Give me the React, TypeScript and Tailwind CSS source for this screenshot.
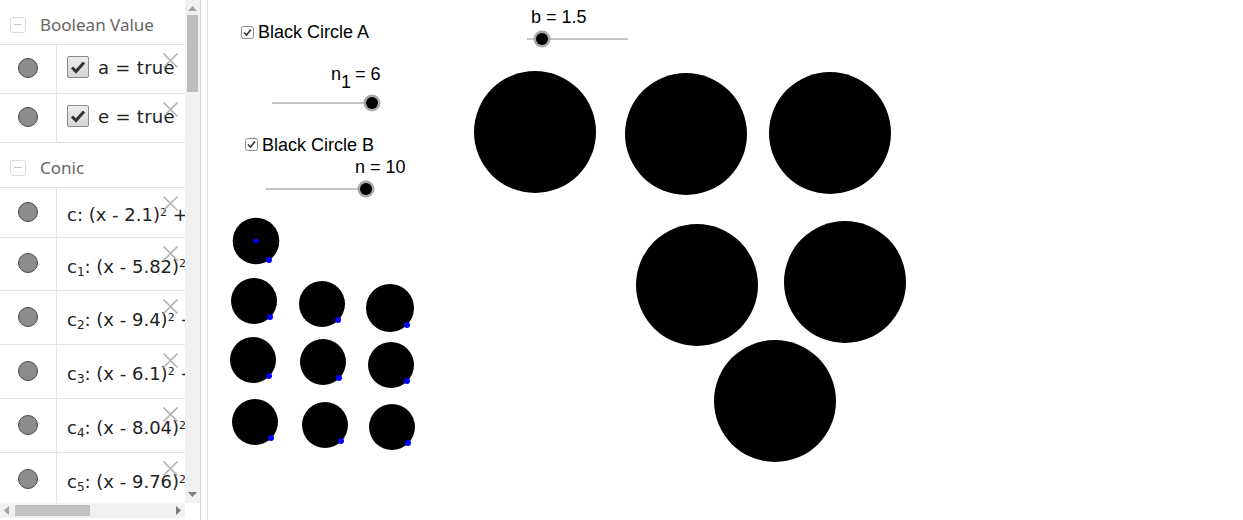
import React from "react";

const SANS = { fontFamily: '"DejaVu Sans", "Noto Sans", sans-serif' };

function Marble() {
  return <div className="w-[20px] h-[20px] rounded-full bg-[#8c8c8c] border border-[#4a4a4a]" />;
}

function DeleteX() {
  return (
    <svg className="absolute right-[6px] top-[7px]" width="17" height="17" viewBox="0 0 17 17">
      <path d="M1.5 1.5 L15.5 15.5 M15.5 1.5 L1.5 15.5" stroke="#b0b0b0" strokeWidth="1.6" fill="none" />
    </svg>
  );
}

function GroupHeader({ label, h }: { label: string; h: string }) {
  return (
    <div className={`flex items-center pt-[5px] ${h} border-b border-[#e3e3e3]`}>
      <div className="ml-[10px] w-[16px] h-[16px] rounded-[3px] border border-[#dcdcdc] flex items-center justify-center">
        <div className="w-[8px] h-[1.5px] bg-[#c8c8c8]" />
      </div>
      <span className="ml-[14px] text-[17px] text-[#666]" style={{ fontFamily: '"Noto Sans", sans-serif' }}>
        {label}
      </span>
    </div>
  );
}

function Row({ h, pad, children }: { h: string; pad: string; children: React.ReactNode }) {
  return (
    <div className={`relative flex ${h} border-b border-[#e3e3e3]`}>
      <div className="w-[57px] shrink-0 flex items-center justify-center border-r border-[#e3e3e3] pb-[2px]">
        <Marble />
      </div>
      <div className={`flex-1 flex items-center overflow-hidden whitespace-nowrap pl-[10px] ${pad}`}>{children}</div>
      <DeleteX />
    </div>
  );
}

function BoolItem({ name }: { name: string }) {
  return (
    <>
      <div className="w-[22px] h-[22px] shrink-0 rounded-[2px] border border-[#8a8a8a] bg-gradient-to-b from-[#ececec] to-[#d6d6d6] flex items-center justify-center">
        <svg width="16" height="14" viewBox="0 0 16 14">
          <path d="M2 7.5 L6 11.5 L14 2.5" stroke="#333" strokeWidth="3" fill="none" />
        </svg>
      </div>
      <span className="ml-[9px] text-[18px] text-[#222] tracking-[0.3px]" style={SANS}>
        {name} = true
      </span>
    </>
  );
}

function ConicItem({ sub, val, tail }: { sub?: string; val: string; tail: string }) {
  return (
    <span className="text-[18px] text-[#222]" style={SANS}>
      c{sub && <sub className="text-[12px]">{sub}</sub>}: (x - {val})
      <sup className="text-[11px]">2</sup> {tail}
    </span>
  );
}

function AlgebraPanel() {
  return (
    <div className="w-[200px] h-[520px] flex flex-col shrink-0">
      <div className="flex h-[503px]">
        <div className="w-[185px] overflow-hidden bg-white">
          <GroupHeader label="Boolean Value" h="h-[45px]" />
          <Row h="h-[49px]" pad="pb-[4px]">
            <BoolItem name="a" />
          </Row>
          <Row h="h-[49px]" pad="pb-[4px]">
            <BoolItem name="e" />
          </Row>
          <GroupHeader label="Conic" h="h-[45px]" />
          <Row h="h-[50px]" pad="pt-[4px]">
            <ConicItem val="2.1" tail="+ (y - 3)" />
          </Row>
          <Row h="h-[53px]" pad="pt-[4px]">
            <ConicItem sub="1" val="5.82" tail="+ (y - 3)" />
          </Row>
          <Row h="h-[54px]" pad="pt-[4px]">
            <ConicItem sub="2" val="9.4" tail="+ (y - 3)" />
          </Row>
          <Row h="h-[54px]" pad="pt-[4px]">
            <ConicItem sub="3" val="6.1" tail="+ (y - 3)" />
          </Row>
          <Row h="h-[54px]" pad="pt-[4px]">
            <ConicItem sub="4" val="8.04" tail="+ (y - 3)" />
          </Row>
          <Row h="h-[54px]" pad="pt-[4px]">
            <ConicItem sub="5" val="9.76" tail="+ (y - 3)" />
          </Row>
        </div>
        {/* vertical scrollbar */}
        <div className="w-[15px] bg-[#f1f1f1] flex flex-col items-center">
          <svg className="mt-[6px]" width="9" height="5" viewBox="0 0 9 5">
            <path d="M0 5 L4.5 0 L9 5 Z" fill="#a3a3a3" />
          </svg>
          <div className="mt-[4px] w-[11px] h-[77px] bg-[#bdbdbd]" />
          <div className="flex-1" />
          <svg className="mb-[6px]" width="9" height="5" viewBox="0 0 9 5">
            <path d="M0 0 L9 0 L4.5 5 Z" fill="#7a7a7a" />
          </svg>
        </div>
      </div>
      {/* horizontal scrollbar */}
      <div className="flex h-[15px]">
        <div className="w-[185px] bg-[#f1f1f1] flex items-center">
          <svg className="ml-[4px]" width="5" height="9" viewBox="0 0 5 9">
            <path d="M5 0 L0 4.5 L5 9 Z" fill="#a3a3a3" />
          </svg>
          <div className="ml-[6px] w-[75px] h-[11px] bg-[#c2c2c2]" />
          <div className="flex-1" />
          <svg className="mr-[4px]" width="5" height="9" viewBox="0 0 5 9">
            <path d="M0 0 L5 4.5 L0 9 Z" fill="#7a7a7a" />
          </svg>
        </div>
        <div className="w-[15px] bg-white" />
      </div>
    </div>
  );
}

const big = [
  [535, 132],
  [686, 134],
  [830, 133],
  [697, 285],
  [845, 282],
  [775, 401],
];

const small = [
  [254, 301, 23, 270, 317],
  [322, 304, 23, 338, 320],
  [390, 308, 24, 407, 325],
  [253, 360, 23, 269, 376],
  [323, 362, 23, 339, 378],
  [391, 365, 23, 407, 381],
  [255, 422, 23, 271, 438],
  [325, 425, 23, 341, 441],
  [392, 427, 23, 408, 443],
];

function Slider({ x1, x2, y, knob }: { x1: number; x2: number; y: number; knob: number }) {
  return (
    <g>
      <line x1={x1} y1={y} x2={x2} y2={y} stroke="#8a8a8a" strokeWidth="1" />
      <circle cx={knob} cy={y} r="8.5" fill="#9a9a9a" opacity="0.85" />
      <circle cx={knob} cy={y} r="6" fill="#000" />
    </g>
  );
}

function CheckBox({ x, y }: { x: number; y: number }) {
  return (
    <g>
      <rect x={x + 0.5} y={y + 0.5} width="12" height="12" rx="2" fill="#fff" stroke="#8a8a8a" strokeWidth="1" />
      <path d={`M${x + 3} ${y + 6.5} L${x + 5.5} ${y + 9} L${x + 10} ${y + 3.5}`} stroke="#333" strokeWidth="1.6" fill="none" />
    </g>
  );
}

function Canvas() {
  const font = '"Liberation Sans", Arial, sans-serif';
  return (
    <div className="relative flex-1 h-[520px] bg-white overflow-hidden">
      <svg className="absolute inset-0" width="1035" height="520">
        <g transform="translate(-208,0)" fontFamily={font} fontSize="18" fill="#000">
          <CheckBox x={241} y={26} />
          <text x={258} y={38}>Black Circle A</text>
          <text x={331} y={80}>n</text>
          <text x={341} y={88}>1</text>
          <text x={355} y={80}>= 6</text>
          <Slider x1={272} x2={372} y={103} knob={372} />

          <CheckBox x={245} y={138} />
          <text x={262} y={151}>Black Circle B</text>
          <text x={355} y={173}>n = 10</text>
          <Slider x1={266} x2={366} y={189} knob={366} />

          <text x={531} y={23}>b = 1.5</text>
          <Slider x1={527} x2={628} y={39} knob={542} />

          {big.map(([cx, cy], i) => (
            <circle key={i} cx={cx} cy={cy} r="61" fill="#000" />
          ))}

          <circle cx={256} cy={241} r="23.3" fill="#000" />
          <circle cx={256} cy={241} r="2.5" fill="#0000ff" />
          <circle cx={269} cy={260} r="3" fill="#0000ff" />
          {small.map(([cx, cy, r, dx, dy], i) => (
            <g key={i}>
              <circle cx={cx} cy={cy} r={r} fill="#000" />
              <circle cx={dx} cy={dy} r="3" fill="#0000ff" />
            </g>
          ))}
        </g>
      </svg>
    </div>
  );
}

export default function App() {
  return (
    <div className="flex w-[1243px] h-[520px] bg-white overflow-hidden">
      <AlgebraPanel />
      <div className="w-[8px] h-[520px] border-l border-[#d4d4d4] border-r border-r-[#e6e6e6] bg-white shrink-0" />
      <Canvas />
    </div>
  );
}
